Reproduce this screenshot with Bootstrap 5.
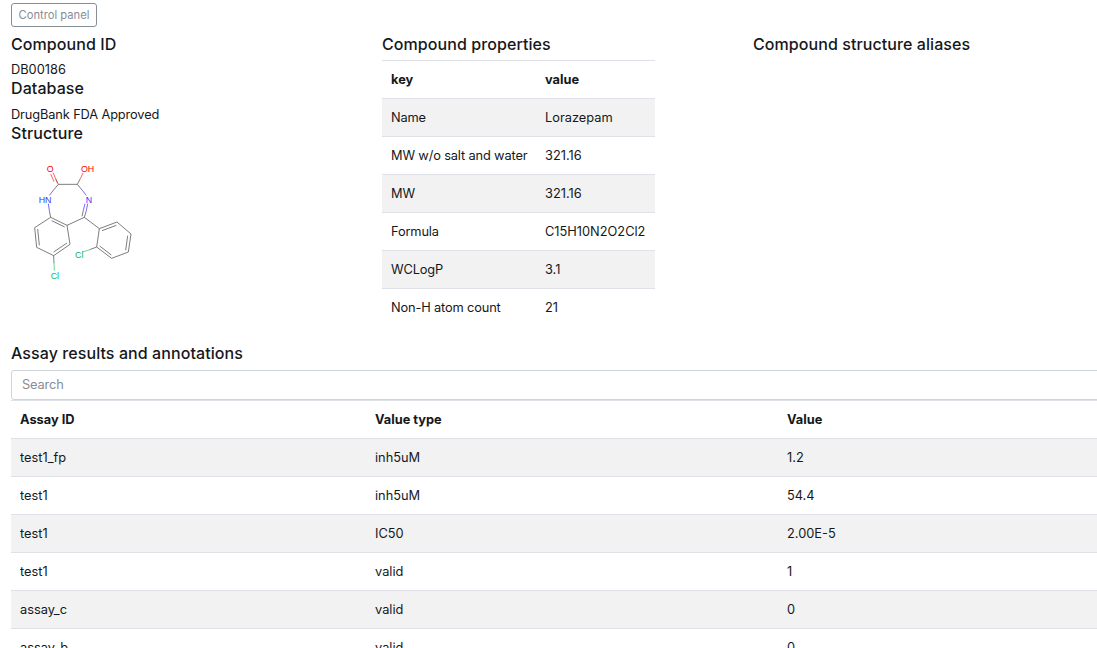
<!DOCTYPE html>
<html lang="en">
<head>
<meta charset="utf-8">
<title>Compound DB00186</title>
<link rel="stylesheet" href="https://cdn.jsdelivr.net/npm/bootstrap@5.3.0/dist/css/bootstrap.min.css">
<style>
  html { overflow: hidden; }
  body { font-family: Inter, "Liberation Sans", sans-serif; font-size: 12.8px; line-height: 19.2px; color: #15181b; height: 648px; overflow: hidden; }
  .page { width: 1124px; padding: 3px 0 0 11px; }
  h5 { font-size: 16px; line-height: 19.2px; margin-bottom: 6.4px; letter-spacing: .08px; }
  .btn-panel { --bs-btn-color: #868e96; --bs-btn-border-color: #868e96; --bs-btn-padding-x: 6px; --bs-btn-padding-y: 0; --bs-btn-font-size: 11.2px; --bs-btn-border-radius: 3px; width: 86px; height: 24px; line-height: 22px; white-space: nowrap; }
  .columns { margin-top: 8px; height: 309px; }
  .summary h5 { margin-bottom: 6px; }
  .summary h5:first-child { margin-bottom: 5.4px; }
  .summary .db-name { letter-spacing: -.12px; padding-top: .5px; }
  .data-table { --bs-table-color: #15181b; --bs-table-striped-bg: #f2f2f2; --bs-table-striped-color: #15181b; --bs-table-bg: #fff; border-collapse: separate; border-spacing: 0; table-layout: fixed; margin: 0; }
  .data-table > * > tr > * { height: 38px; padding: 0 9px; border-width: 1px 0 0; border-top: 1px solid #dee2e6; vertical-align: middle; white-space: nowrap; }
  .props { width: 273px; margin-top: -.6px; }
  .props th:first-child { width: 154px; }
  .props td:first-child { letter-spacing: -.14px; }
  .assay > * > tr > * { padding-top: 1px; }
  .assay th:nth-child(1) { width: 355px; }
  .assay th:nth-child(2) { width: 412px; }
  .search { height: 30px; font-size: 12.8px; padding: 0 9px 0 10px; border-color: #ced4da; border-radius: 3px; }
  .search::placeholder { color: #868e96; letter-spacing: -.12px; }
  .molecule { display: block; margin: 6.4px 0 0 9px; font-family: "Liberation Sans", sans-serif; font-size: 26.5px; }
</style>
</head>
<body>
<main class="page">
  <button type="button" class="btn btn-outline-secondary btn-panel d-block">Control panel</button>
  <div class="row g-0 columns">
    <section class="col-4 summary">
      <h5>Compound ID</h5>
      <div>DB00186</div>
      <h5>Database</h5>
      <div class="db-name">DrugBank FDA Approved</div>
      <h5>Structure</h5>
      <svg class="molecule mt-0 pt-0" width="130" height="136" viewBox="0 -18 390 408" role="img" aria-label="Lorazepam structure">
        <g fill="none" stroke="#555" stroke-width="2.3">
          <path d="M107 71 115 88H172L181 71M115 88 100 106M172 88 187 106M199 167 193 187M190 166 186 184M88 167 92 187"/>
          <path d="M92 187 141 211 150 268 101 302 50 277 44 218ZM95 197 134 216M141 264 101 291M58 271 53 222"/>
          <path d="M141 211 193 187 238 221 291 201 333 237 325 291 275 310 230 276 238 221M246 227 289 211M323 242 317 286M274 300 239 273M230 276 209 284M101 302 102 325"/>
        </g>
        <g fill="none" stroke-width="2.3">
          <path stroke="#ff3b30" d="M107 71 99 53M102 80 92 57M112 84 107 72M181 71 189 54"/>
          <path stroke="#4b3bff" d="M100 106 88 121M187 106 199 121M203 146 199 167M195 146 190 166M85 146 88 167"/>
          <path stroke="#35cf73" d="M209 284 188 291M102 325 103 347"/>
        </g>
        <g fill="#f00"><text x="80" y="51">O</text><text x="183" y="51">OH</text></g>
        <g fill="#33f"><text x="56" y="144">HN</text><text x="197" y="144">N</text></g>
        <g fill="#00b86b"><text x="165" y="309">Cl</text><text x="92" y="372">Cl</text></g>
      </svg>
    </section>
    <section class="col-4">
      <h5>Compound properties</h5>
      <table class="table table-striped data-table props">
        <thead><tr><th>key</th><th>value</th></tr></thead>
        <tbody>
          <tr><td>Name</td><td>Lorazepam</td></tr>
          <tr><td>MW w/o salt and water</td><td>321.16</td></tr>
          <tr><td>MW</td><td>321.16</td></tr>
          <tr><td>Formula</td><td>C15H10N2O2Cl2</td></tr>
          <tr><td>WCLogP</td><td>3.1</td></tr>
          <tr><td>Non-H atom count</td><td>21</td></tr>
        </tbody>
      </table>
    </section>
    <section class="col-4"><h5>Compound structure aliases</h5></section>
  </div>
  <section>
    <h5>Assay results and annotations</h5>
    <input type="text" class="form-control search" placeholder="Search" aria-label="Search">
    <table class="table table-striped data-table assay">
      <thead><tr><th>Assay ID</th><th>Value type</th><th>Value</th></tr></thead>
      <tbody>
        <tr><td>test1_fp</td><td>inh5uM</td><td>1.2</td></tr>
        <tr><td>test1</td><td>inh5uM</td><td>54.4</td></tr>
        <tr><td>test1</td><td>IC50</td><td>2.00E-5</td></tr>
        <tr><td>test1</td><td>valid</td><td>1</td></tr>
        <tr><td>assay_c</td><td>valid</td><td>0</td></tr>
        <tr><td>assay_b</td><td>valid</td><td>0</td></tr>
      </tbody>
    </table>
  </section>
</main>
<script src="https://cdn.jsdelivr.net/npm/bootstrap@5.3.0/dist/js/bootstrap.bundle.min.js"></script>
</body>
</html>
